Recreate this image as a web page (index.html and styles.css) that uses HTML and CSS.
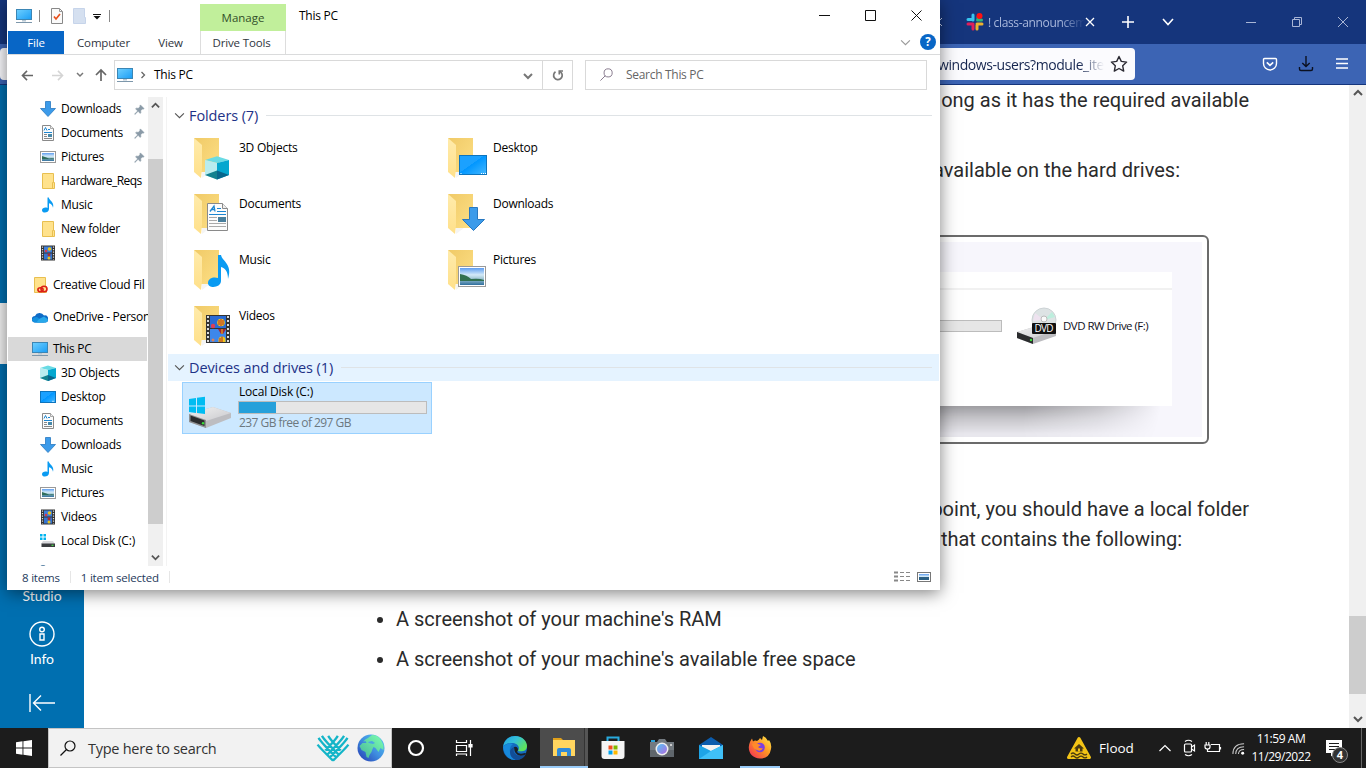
FILE: index.html
```html
<!DOCTYPE html>
<html lang="en">
<head>
<meta charset="utf-8">
<title>This PC</title>
<link rel="stylesheet" href="styles.css">
</head>
<body>
<svg class="sprite" width="0" height="0" aria-hidden="true">
  <defs>
    <linearGradient id="gScreen" x1="0" y1="0" x2="1" y2="1"><stop offset="0" stop-color="#6fd0ff"/><stop offset="1" stop-color="#1a9df5"/></linearGradient>
    <linearGradient id="gDesk" x1="0" y1="0" x2="1" y2="1"><stop offset="0" stop-color="#1ba1ff"/><stop offset=".45" stop-color="#1ba1ff"/><stop offset=".46" stop-color="#0096ff"/><stop offset="1" stop-color="#45b8ff"/></linearGradient>
    <linearGradient id="gFold" x1="0" y1="0" x2="1" y2="1"><stop offset="0" stop-color="#f0ca67"/><stop offset="1" stop-color="#fddf85"/></linearGradient>
    <linearGradient id="gFlap" x1="0" y1="0" x2="0" y2="1"><stop offset="0" stop-color="#ffebab"/><stop offset="1" stop-color="#ffe08a"/></linearGradient>
    <linearGradient id="gSky" x1="0" y1="0" x2="0" y2="1"><stop offset="0" stop-color="#5e9df0"/><stop offset=".4" stop-color="#d4eaf8"/><stop offset=".6" stop-color="#a8cbd8"/><stop offset="1" stop-color="#2f6e9c"/></linearGradient>
    <linearGradient id="gMetal" x1="0" y1="0" x2="1" y2="1"><stop offset="0" stop-color="#f1f1f1"/><stop offset="1" stop-color="#c9c9cd"/></linearGradient>
    <linearGradient id="gEdge" x1="0" y1="0" x2="1" y2=".6"><stop offset="0" stop-color="#1d9fe0"/><stop offset=".5" stop-color="#35c1d8"/><stop offset="1" stop-color="#5fe35a"/></linearGradient>
    <linearGradient id="gFire" x1="1" y1="0" x2="0" y2="1"><stop offset="0" stop-color="#fff04a"/><stop offset=".45" stop-color="#ff9524"/><stop offset="1" stop-color="#f0245c"/></linearGradient>
    <linearGradient id="gGlobe" x1="1" y1="0" x2="0" y2="1"><stop offset="0" stop-color="#5cc8f5"/><stop offset=".5" stop-color="#3f8fe0"/><stop offset="1" stop-color="#2336b0"/></linearGradient>
    <linearGradient id="gLand" x1="1" y1="0" x2="0" y2="1"><stop offset="0" stop-color="#7dffb0"/><stop offset="1" stop-color="#45b59a"/></linearGradient>
    <linearGradient id="gLens" x1="0" y1="0" x2="1" y2="1"><stop offset="0" stop-color="#54c4f4"/><stop offset="1" stop-color="#b06ae0"/></linearGradient>
  </defs>
  <symbol id="pc" viewBox="0 0 16 16"><rect x=".5" y="1.500" width="15" height="10" fill="url(#gScreen)" stroke="#3b86b5"/><path d="M6 12h4v1.500H6z" fill="#b6c6d2"/><path d="M0 14.500h16" stroke="#7d97ab"/></symbol>
  <symbol id="down" viewBox="0 0 16 16"><path d="M5.500.5h5v7h5L8 15.500.5 7.500h5z" fill="#3c9bea" stroke="#2878c0" stroke-width=".8"/></symbol>
  <symbol id="doc" viewBox="0 0 16 16"><path d="M2.500.5h8l3 3v12h-11z" fill="#fbfbfb" stroke="#8a8a8a"/><path d="M10.500.5v3h3" fill="#eee" stroke="#8a8a8a" stroke-width=".7"/><path d="M4 5.500 5.500 2.500 7 5.500M8 4.500h2M4 7.500h8" stroke="#1c86d1" fill="none"/><path d="M4 9.500h3M4 11.500h3M4 13.500h8" stroke="#888"/><path d="M8 9h4v3H8z" fill="#4788a8"/></symbol>
  <symbol id="pic" viewBox="0 0 16 16"><rect x=".5" y="2.500" width="15" height="11" fill="#fff" stroke="#999"/><rect x="2" y="4" width="12" height="8" fill="url(#gSky)"/><path d="M2 7q4 1 7 2.500 3-.5 5 0v.8H2z" fill="#2f6d5c"/></symbol>
  <symbol id="fold" viewBox="0 0 16 16"><path d="M2.500.5h11v9h1v6h-12z" fill="#ffe28c" stroke="#e8bf50"/><path d="M13.500 9.500h-1v6" stroke="#e8bf50" fill="none"/></symbol>
  <symbol id="music" viewBox="0 0 16 16"><path d="M7.500.5h1.300C9.200 3.500 14.500 4.800 13 10.700 12.600 8 11 6.700 9 6.200V12c0 4.200-7 4.800-7 1.300 0-2.300 3-3.300 5.500-2.300z" fill="#0a9bf2"/></symbol>
  <symbol id="video" viewBox="0 0 16 16"><rect x="1" y=".5" width="14" height="15" fill="#333"/><rect x="4" y="1.500" width="8" height="6" fill="#3d7fdc"/><rect x="4" y="8.500" width="8" height="6" fill="#3474d0"/><circle cx="9.500" cy="4" r="1.800" fill="#e8c21c"/><circle cx="6" cy="6" r="1.300" fill="#d23a50"/><circle cx="9" cy="9.800" r="1.500" fill="#b32b2b"/><circle cx="9" cy="13" r="1.500" fill="#e8c21c"/><path d="M2.500 1.500v13M13.500 1.500v13" stroke="#ddd" stroke-width="1.200" stroke-dasharray="1.200 1.300"/></symbol>
  <symbol id="cube" viewBox="0 0 16 16"><path d="M0 3 8 .5 16 3 8 5z" fill="#6adbe4"/><path d="M0 3l8 2v11l-8-3z" fill="#b9ecef"/><path d="M16 3 8 5v11l8-3z" fill="#04a7cf"/><path d="M0 13l8-3v6z" fill="#12818f"/><path d="M8 10l8 3-8 3z" fill="#08668c"/></symbol>
  <symbol id="desk" viewBox="0 0 16 16"><rect x=".5" y="2.500" width="15" height="11" fill="url(#gDesk)" stroke="#0d74bd"/><path d="M12 12.300h2.500" stroke="#fff" stroke-width=".8" stroke-dasharray=".8 .4"/></symbol>
  <symbol id="disk" viewBox="0 0 16 16"><path d="M0 1h2.500v2.500H0zM3.500 1H6v2.500H3.500zM0 4.500h2.500V7H0zM3.500 4.500H6V7H3.500z" fill="#00b4ef"/><path d="M3 8h10l2 3H1z" fill="#d9d9dc"/><rect x="1.500" y="10.500" width="13.500" height="3.500" fill="#3b3d40"/><rect x="11.500" y="11.700" width="2" height="1.200" fill="#4ce04c"/></symbol>
  <symbol id="cc" viewBox="0 0 16 16"><path d="M2.500.5h11v9h1v6h-12z" fill="#ffe28c" stroke="#e8bf50"/><g fill="none" stroke="#dc1f17" stroke-width="1.600"><ellipse cx="8.500" cy="12.800" rx="2.600" ry="2"/><ellipse cx="12" cy="12" rx="3" ry="2.800"/></g></symbol>
  <symbol id="cloud" viewBox="0 0 16 16"><path d="M3 13.500A3.200 3.200 0 0 1 3 7a5 5 0 0 1 9-.5 3.500 3.500 0 0 1 1.500 7z" fill="#0f6cc7"/><path d="M5 8 12.500 13.500h-9A3 3 0 0 1 0 10.500Q1 8 5 8z" fill="#1490df"/><path d="m7 10 5-2.500 3.500 2.500q1 3-2 3.500h-9z" fill="#28a8ea"/></symbol>
  <symbol id="pin" viewBox="0 0 12 12"><path d="M7 1l4 4-1 .6-.8-.2L7.300 7.300 7.500 9.500l-.8.800L4.500 8 1 11.400.6 11 4 7.500 1.700 5.300l.8-.8 2.200.2 1.900-1.900L6.400 2z" fill="#8a9aa7" stroke="#8a9aa7" stroke-width=".6"/></symbol>
  <symbol id="bigfold" viewBox="0 0 40 44"><path d="M1 1h25v34H8z" fill="url(#gFold)"/><path d="M1 1l8 7v24l-1 9-7-6z" fill="url(#gFlap)"/><path d="M9 35h8l-8 6z" fill="#eee" opacity=".6"/></symbol>
  <symbol id="chev" viewBox="0 0 10 10"><path d="M1 3l4 4 4-4" fill="none" stroke="currentColor"/></symbol>
  <symbol id="mag" viewBox="0 0 16 16"><circle cx="10" cy="6" r="5" fill="none" stroke="currentColor" stroke-width="1.200"/><path d="M6.500 9.500.5 15.500" stroke="currentColor" stroke-width="1.200"/></symbol>
  <symbol id="drive" viewBox="0 0 44 34"><path d="M1 18 25 11 43 17v5L18 32 1 26z" fill="#bdbdc1"/><path d="M1 18 25 11l18 6-25 8z" fill="url(#gMetal)"/><path d="M1 18l17 6v8L1 26z" fill="#8f9092"/><path d="M2.500 19.500l14 5v5.500l-14-5z" fill="#2b2c2e"/><circle cx="15" cy="27.300" r="1.200" fill="#38e038"/></symbol>
</svg>

<div class="screen">
  <div class="browser">
    <header class="tabstrip">
      <span class="oldx"><svg width="8" height="10" viewBox="0 0 8 10"><path d="M-4 1l8 8M4 1l-8 8" stroke="#c6d1ea" fill="none"/></svg></span>
      <svg class="slack" viewBox="0 0 18 18"><g stroke-linecap="round" stroke-width="3"><path d="M7 2v5M2 6.500h4" stroke="#36c5f0"/><path d="M12 7V4M11.500 7h4" stroke="#2eb67d"/><path d="M7 11v5M2 11h5" stroke="#e01e5a"/><path d="M11 11h5M11 12v4" stroke="#ecb22e"/></g><circle cx="13.500" cy="3" r="3" fill="#f11"/></svg>
      <span class="tabtitle">! class-announcem</span>
      <svg class="tabx" viewBox="0 0 10 10"><path d="M1 1l8 8M9 1 1 9" stroke="#fff" stroke-width="1.300"/></svg>
      <svg class="newtab" viewBox="0 0 12 12"><path d="M6 0v12M0 6h12" stroke="#fff" stroke-width="1.600"/></svg>
      <svg class="tabchev" viewBox="0 0 12 8"><path d="M1 1l5 5.500L11 1" fill="none" stroke="#fff" stroke-width="1.600"/></svg>
      <div class="wincontrols">
        <svg viewBox="0 0 10 10"><path d="M0 5.500h10"/></svg>
        <svg viewBox="0 0 10 10"><path d="M.5 2.500h7v7h-7zM2.500 2.500v-2h7v7h-2"/></svg>
        <svg viewBox="0 0 10 10"><path d="M0 0l10 10M10 0 0 10"/></svg>
      </div>
    </header>
    <div class="toolbar">
      <div class="urlbar"><span class="url">windows-users?module_iter</span>
        <svg class="star" viewBox="0 0 18 18"><path d="M9 1.500l2.300 4.900 5.300.7-3.900 3.700 1 5.300L9 13.500l-4.700 2.600 1-5.300L1.400 7.100l5.300-.7z" fill="none" stroke="#2b2a33" stroke-width="1.400" stroke-linejoin="round"/></svg>
      </div>
      <div class="tools">
        <svg viewBox="0 0 16 16" fill="none" stroke="#fff" stroke-width="1.400"><path d="M2.500 2.500h11a1 1 0 0 1 1 1V7.500a6.500 6.500 0 0 1-13 0v-4a1 1 0 0 1 1-1z"/><path d="M4.800 6.300 8 9.300l3.200-3" stroke-width="1.600"/></svg>
        <svg viewBox="0 0 16 16" fill="none" stroke="#0b1020" stroke-width="1.400"><path d="M8 0v10.500M4.300 7 8 10.500 11.700 7M1.500 11v2q0 1.500 1.500 1.500h10q1.500 0 1.500-1.500v-2"/></svg>
        <svg viewBox="0 0 16 16" stroke="#fff" stroke-width="1.400"><path d="M2 3h12M2 7.500h12M2 12h12"/></svg>
      </div>
    </div>
    <div class="viewport">
      <nav class="rail">
        <div class="railactive"></div>
        <div class="railfoot">
          <span>Studio</span>
          <svg class="info" viewBox="0 0 26 26" fill="none" stroke="#fff" stroke-width="1.400"><circle cx="13" cy="13" r="12"/><circle cx="13" cy="8.500" r="2.300"/><path d="M11 13h4v6h-4z"/></svg>
          <span>Info</span>
          <svg class="collapse" viewBox="0 0 26 18" fill="none" stroke="#fff" stroke-width="1.400"><path d="M1 0v18M26 9H5M12 1.500 4.500 9l7.500 7.500"/></svg>
        </div>
      </nav>
      <article class="page">
        <p class="l1">ong as it has the required available</p>
        <p class="l2">available on the hard drives:</p>
        <div class="figure"><div class="figbg">
          <div class="figcard">
            <div class="figtop"></div>
            <div class="figrow"><div class="figbar"></div>
              <svg class="dvd" viewBox="0 0 40 38"><path d="M0 25 20 19l19 4v6L16 37 0 31z" fill="#bcbcc0"/><path d="M0 25 20 19l19 4-23 8z" fill="url(#gMetal)"/><path d="M0 25l16 6v6L0 31z" fill="#2b2c2e"/><circle cx="14" cy="33" r="1.200" fill="#38e038"/><circle cx="27" cy="13" r="12" fill="#dde3e4" stroke="#cdd3d5"/><path d="M27 13 35 5l3 5z" fill="#bdeedd"/><path d="M27 13l-11 1 2-8z" fill="#eee2ef"/><circle cx="27" cy="12" r="3" fill="#fafafa" stroke="#bbb"/><rect x="15" y="16" width="24" height="11" rx="1" fill="#111"/><text x="27" y="25.300" fill="#fff" font-family="Open Sans, sans-serif" font-size="10" text-anchor="middle" textLength="19">DVD</text></svg>
              <span>DVD RW Drive (F:)</span></div>
          </div>
          <div class="figshade"></div>
        </div></div>
        <p class="l3">point, you should have a local folder</p>
        <p class="l4">that contains the following:</p>
        <ul><li>A screenshot of your machine's RAM</li><li>A screenshot of your machine's available free space</li></ul>
      </article>
      <div class="vscroll">
        <svg viewBox="0 0 10 10"><path d="M1 7l4-4 4 4" fill="none" stroke="#555" stroke-width="2"/></svg>
        <div class="vthumb"></div>
        <svg viewBox="0 0 10 10"><path d="M1 3l4 4 4-4" fill="none" stroke="#555" stroke-width="2"/></svg>
      </div>
    </div>
  </div>

  <section class="explorer">
    <header class="titlebar">
      <div class="quick">
        <svg class="i16"><use href="#pc"/></svg><i class="sep s1"></i>
        <svg class="i16 q2" viewBox="0 0 16 16"><path d="M2.500.5h8l3 3v12h-11z" fill="#fafafa" stroke="#888"/><path d="M10.500.5v3h3" fill="none" stroke="#999"/><path d="M5 8.500 7 11l4-5" fill="none" stroke="#e8501c" stroke-width="1.700"/></svg>
        <svg class="i16 q3" viewBox="0 0 16 16"><path d="M1.500.5h11v9h1v6h-12z" fill="#d5e0f0" stroke="#c6d4ea"/></svg>
        <svg class="q4" viewBox="0 0 8 6"><path d="M0 .5h8" stroke="#111"/><path d="M.5 2h7L4 5.500z" fill="#111"/></svg><i class="sep s2"></i>
      </div>
      <div class="manage">Manage</div>
      <span class="wtitle">This PC</span>
      <div class="ctl">
        <svg viewBox="0 0 11 11"><path d="M0 5.500h11"/></svg>
        <svg viewBox="0 0 11 11"><path d="M.5.5h10v10H.5z"/></svg>
        <svg viewBox="0 0 11 11"><path d="M.5.5l10 10M10.500.5l-10 10"/></svg>
      </div>
    </header>
    <div class="ribbon">
      <span class="file">File</span><span class="r1">Computer</span><span class="r2">View</span><span class="r3">Drive Tools</span>
      <svg class="rchev"><use href="#chev"/></svg><span class="help">?</span>
    </div>
    <div class="navrow">
      <svg class="n1" viewBox="0 0 14 12" fill="none" stroke="#666" stroke-width="1.700"><path d="M1.500 6H13M6.500 1 1.500 6l5 5"/></svg>
      <svg class="n2" viewBox="0 0 14 12" fill="none" stroke="#d4d4d4" stroke-width="1.700"><path d="M12.500 6H1M7.500 1l5 5-5 5"/></svg>
      <svg class="n3" viewBox="0 0 8 6" fill="none" stroke="#777" stroke-width="1.500"><path d="M1 1l3 3 3-3"/></svg>
      <svg class="n4" viewBox="0 0 12 14" fill="none" stroke="#666" stroke-width="1.700"><path d="M6 2v11M1 7l5-5 5 5"/></svg>
      <div class="address"><svg class="i16"><use href="#pc"/></svg>
        <svg class="a1" viewBox="0 0 6 8"><path d="M1.500 1l3 3-3 3" fill="none" stroke="#666" stroke-width="1.300"/></svg><span>This PC</span>
        <svg class="a2" viewBox="0 0 10 10"><path d="M1 3l4 4 4-4" fill="none" stroke="#777" stroke-width="2"/></svg>
        <div class="refresh"><svg viewBox="0 0 12 12" fill="none" stroke="#777" stroke-width="1.700"><path d="M3.500 2.800A4.300 4.300 0 1 0 9.300 3.700L7.500 2"/><path d="M7.300 5.500V2H11"/></svg></div>
      </div>
      <div class="search"><svg><use href="#mag"/></svg><span>Search This PC</span></div>
    </div>
    <div class="body">
      <nav class="tree">
        <div class="row sub"><svg><use href="#down"/></svg><span>Downloads</span><svg class="pin"><use href="#pin"/></svg></div>
        <div class="row sub"><svg><use href="#doc"/></svg><span>Documents</span><svg class="pin"><use href="#pin"/></svg></div>
        <div class="row sub"><svg><use href="#pic"/></svg><span>Pictures</span><svg class="pin"><use href="#pin"/></svg></div>
        <div class="row sub"><svg><use href="#fold"/></svg><span class="tight">Hardware_Reqs</span></div>
        <div class="row sub"><svg><use href="#music"/></svg><span>Music</span></div>
        <div class="row sub"><svg><use href="#fold"/></svg><span>New folder</span></div>
        <div class="row sub"><svg><use href="#video"/></svg><span>Videos</span></div>
        <div class="row top"><svg><use href="#cc"/></svg><span>Creative Cloud Fil</span></div>
        <div class="row top"><svg><use href="#cloud"/></svg><span>OneDrive - Person</span></div>
        <div class="row top sel"><svg><use href="#pc"/></svg><span>This PC</span></div>
        <div class="row sub"><svg><use href="#cube"/></svg><span>3D Objects</span></div>
        <div class="row sub"><svg><use href="#desk"/></svg><span>Desktop</span></div>
        <div class="row sub"><svg><use href="#doc"/></svg><span>Documents</span></div>
        <div class="row sub"><svg><use href="#down"/></svg><span>Downloads</span></div>
        <div class="row sub"><svg><use href="#music"/></svg><span>Music</span></div>
        <div class="row sub"><svg><use href="#pic"/></svg><span>Pictures</span></div>
        <div class="row sub"><svg><use href="#video"/></svg><span>Videos</span></div>
        <div class="row sub"><svg><use href="#disk"/></svg><span class="wide">Local Disk (C:)</span></div>
        <div class="cutoff"></div>
      </nav>
      <div class="treescroll">
        <svg viewBox="0 0 10 10"><path d="M1 7l4-4 4 4" fill="none" stroke="#555" stroke-width="2"/></svg>
        <div class="tthumb"></div>
        <svg viewBox="0 0 10 10"><path d="M1 3l4 4 4-4" fill="none" stroke="#555" stroke-width="2"/></svg>
      </div>
      <main class="files">
        <div class="group g1"><svg><use href="#chev"/></svg><span>Folders (7)</span><i></i></div>
        <div class="grid">
          <div class="item"><svg viewBox="0 0 40 44"><use href="#bigfold" width="40" height="44"/><use href="#cube" x="12" y="18" width="24" height="25"/></svg><span>3D Objects</span></div>
          <div class="item"><svg viewBox="0 0 40 44"><use href="#bigfold" width="40" height="44"/><rect x="12.500" y="18.500" width="27" height="19" fill="url(#gDesk)" stroke="#0d74bd"/><path d="M34 36.500h5M13.500 36.500h1" stroke="#fff" stroke-dasharray="1 1"/></svg><span>Desktop</span></div>
          <div class="item"><svg viewBox="0 0 40 44"><use href="#bigfold" width="40" height="44"/><path d="M14.500 10.500h15l5 5v22h-20z" fill="#fcfcfc" stroke="#8a8a8a"/><path d="M29.500 10.500v5h5" fill="#eee" stroke="#8a8a8a"/><path d="M17 18.500l4-5.500 1 5.500m-4-2h4" stroke="#1c86d1" stroke-width="1.300" fill="none"/><path d="M24 15.500h4M24 18.500h9M16 21.500h17" stroke="#1c86d1"/><path d="M16 24.500h8M16 27.500h8M16 30.500h17M16 33.500h17" stroke="#aaa"/><path d="M25 24h8v5h-8z" fill="#487f9d"/></svg><span>Documents</span></div>
          <div class="item"><svg viewBox="0 0 40 44"><use href="#bigfold" width="40" height="44"/><path d="M22.500 14.500h8v12h7L26.500 37.500 15.500 26.500h7z" fill="#3c9bea" stroke="#2878c0"/></svg><span>Downloads</span></div>
          <div class="item"><svg viewBox="0 0 40 44"><use href="#bigfold" width="40" height="44"/><path d="M25 6h3c1 6 12 9 7 24 0-8-3-11-7-12v14c0 7-13 8-13 2 0-5 6-6.500 10-5z" fill="#0a9bf2"/></svg><span>Music</span></div>
          <div class="item"><svg viewBox="0 0 40 44"><use href="#bigfold" width="40" height="44"/><rect x="11.500" y="17.500" width="27" height="20" fill="#fff" stroke="#999"/><rect x="13" y="19" width="24" height="17" fill="url(#gSky)"/><path d="M13 25q7 1 11 5 8-1 13 1v1H13z" fill="#31704f"/></svg><span>Pictures</span></div>
          <div class="item"><svg viewBox="0 0 40 44"><use href="#bigfold" width="40" height="44"/><rect x="13" y="10" width="24" height="28" fill="#333"/><rect x="17" y="11" width="16" height="12" fill="#2a6bd4"/><rect x="17" y="24" width="16" height="13" fill="#3d87ea"/><path d="M15 11v26M35 11v26" stroke="#ddd" stroke-width="2" stroke-dasharray="2 2"/><circle cx="28" cy="17.500" r="3.800" fill="#f0c818"/><path d="M28 14v7M26 15v5M30 15v5" stroke="#b32432"/><circle cx="20" cy="21" r="2.200" fill="#dd4057"/><path d="M25 24h8l-3 5h-2z" fill="#a22536"/><path d="M29 24v5" stroke="#f0c818"/><path d="M25.500 37v-2a3.500 3.500 0 0 1 7 0v2z" fill="#f0c818"/><path d="M29 31.500V37M27 33v4" stroke="#b32432"/><circle cx="20" cy="35" r="1.500" fill="#dd8057"/></svg><span>Videos</span></div>
        </div>
        <div class="group g2"><svg><use href="#chev"/></svg><span>Devices and drives (1)</span><i></i></div>
        <div class="disk">
          <svg class="diskicon" viewBox="0 0 44 38"><use href="#drive" y="3" width="44" height="34"/><path d="M1 6l7-1v7.500H1zM9 4.800l8-1v8.700H9zM1 13.500h7V20l-7-1zM9 13.500h8V21l-8-1z" fill="#00bcf2"/></svg>
          <div class="diskinfo"><span>Local Disk (C:)</span><div class="usage"><div style="width:20%"></div></div><span class="free">237 GB free of 297 GB</span></div>
        </div>
      </main>
    </div>
    <footer class="status"><span>8 items</span><i></i><span>1 item selected</span><i></i>
      <svg class="v1" viewBox="0 0 16 12"><path d="M0 1.500h4M0 5.500h4M0 9.500h4" stroke="#888" stroke-width="2"/><path d="M6 1.500h4M12 1.500h4M6 5.500h4M12 5.500h4M6 9.500h4M12 9.500h4" stroke="#888"/></svg>
      <svg class="v2" viewBox="0 0 14 12"><rect x=".5" y="1.500" width="13" height="9" fill="#fff" stroke="#777"/><rect x="2" y="3" width="10" height="6" fill="url(#gSky)"/><path d="M2 6h10v3H2z" fill="#2b5f83"/></svg>
    </footer>
  </section>

  <footer class="taskbar">
    <div class="start"><svg viewBox="0 0 16 16"><path d="M0 2.200l6.500-.9v6.200H0zM7.400 1.200 16 0v7.500H7.400zM0 8.400h6.500v6.300L0 13.800zM7.400 8.400H16V16l-8.600-1.200z" fill="#fff"/></svg></div>
    <div class="tsearch"><svg class="tmag"><use href="#mag"/></svg><span>Type here to search</span>
      <svg class="giving" viewBox="0 0 32 28" fill="none" stroke="#14b5c8" stroke-width="2.400"><path d="M1 3q3 5 18 20M4.500 1q3 5 17 19M11 1q3 5 13 15M0 10q3 4 16 16.500M31 3q-3 5-18 20M27.500 1q-3 5-17 19M21 1q-3 5-13 15M32 10q-3 4-16 16.500"/></svg>
      <svg class="globe" viewBox="0 0 28 28"><circle cx="14" cy="14" r="13.500" fill="url(#gGlobe)"/><path d="M6 8q2-3 5-4l4-3q6 0 9 5l2.500 5v5l-3-2-2 4-3-4-2-1-1 2-1 3-2 3-1 3-2-1-1-5-4-2-2-4 3-3h4l-1-2-3 1z" fill="url(#gLand)"/><path d="M11 8l4-1 3 2-2 1-4-1z" fill="#4aa6e4"/></svg>
    </div>
    <div class="apps">
      <div class="app"><svg viewBox="0 0 24 24"><circle cx="12" cy="12" r="7" fill="none" stroke="#fff" stroke-width="2.200"/></svg></div>
      <div class="app view"><svg viewBox="0 0 24 24" fill="none" stroke="#fff" stroke-width="1.200"><path d="M4.500 4v2.500h10V4M4.500 9.500h10v6h-10zM4.500 20v-2h10v2M18.500 4v16"/><path d="M17 8.500h3v2.500h-3z" fill="#fff"/></svg></div>
      <div class="app edge"><svg viewBox="0 0 24 24"><circle cx="12" cy="12" r="12" fill="#146bc0"/><path d="M0 11C1 4 6 0 12 0c8 0 12 6 12 10 0 5-5 6-9 5 3-5-2-8-6-8-5 0-8 2-9 4z" fill="url(#gEdge)"/><path d="M0 11q4-5 10-3-4 3-3 8 2 6 6 8Q2 24 0 11z" fill="#1789db"/><path d="M11 11q-2 8 6 9 3 0 6-2-3 6-10 6-6-2-6-8 0-3 4-5z" fill="#124d96"/><path d="M11 11q3-1 4 2 0 2-1 3 2 3 8 1l1 .5-1.500 1.500q-10 3-10.500-8z" fill="#1b1f25"/></svg></div>
      <div class="app active"><svg viewBox="0 0 24 24"><path d="M1 3h8l2 2h12v3H1z" fill="#e0a01a"/><path d="M1 5h22v16H1z" fill="#ffd55f"/><path d="M5 21v-6q0-2 2-2h10q2 0 2 2v6h-4v-4H9v4z" fill="#2f8ad8"/></svg></div>
      <div class="app"><svg viewBox="0 0 24 24"><path d="M6.500 6V1.500h11V6" fill="none" stroke="#28aadd" stroke-width="2"/><path d="M.5 5h23v15q0 3-3 3h-17q-3 0-3-3z" fill="#f5f5f5"/><path d="M7.500 9.500h4v4h-4z" fill="#f25022"/><path d="M12.500 9.500h4v4h-4z" fill="#7fba00"/><path d="M7.500 14.500h4v4h-4z" fill="#00a4ef"/><path d="M12.500 14.500h4v4h-4z" fill="#ffb900"/></svg></div>
      <div class="app"><svg viewBox="0 0 24 24"><path d="M1 4h4v3H1z" fill="#2aa1d8"/><path d="M0 6h7l2-3h6l2 3h7v15H0z" fill="#737a80"/><path d="M0 14h24v7H0z" fill="#5f666c"/><circle cx="12" cy="13" r="6.500" fill="#eee"/><circle cx="12" cy="13" r="5" fill="url(#gLens)"/><rect x="20" y="8" width="2" height="2" fill="#ccc"/></svg></div>
      <div class="app"><svg viewBox="0 0 24 24"><path d="M0 9 12 1l12 8v4H0z" fill="#0b5cad"/><path d="M3 9h18v8H3z" fill="#f2f2f2"/><path d="M0 9l12 6L24 9v14H0z" fill="#1ea4e6"/><path d="M24 9v14H0l12-8z" fill="#40c0f7"/></svg></div>
      <div class="app running"><svg viewBox="0 0 24 24"><path d="M12 23.500C5 23.500.5 18.500.8 12 1 8 3 5 4 3.500l1 3Q7 5 9 6q2-1 3-3l2 2 1-4q3 1 5 5l1-1q3 4 2 9-1.500 9.500-11 9.500z" fill="url(#gFire)"/><circle cx="12" cy="12.500" r="4.800" fill="#7b3fe0"/><path d="M4 9q4-2 6 0l3 1-3 2q2 2 5 1-2 4-6 2-4-1-5-6z" fill="#ff8a2a"/></svg></div>
    </div>
    <div class="tray">
      <svg class="flood" viewBox="0 0 24 22"><path d="M12 1.500 22.500 20.500h-21z" fill="#f4c416" stroke="#f4c416" stroke-width="3" stroke-linejoin="round"/><path d="M7 11.500 12 7l5 4.500h-1.500v3h-7v-3z" fill="#4a3a10"/><path d="M4 17q2-2 4 0t4 0 4 0 4 0M4 20q2-2 4 0t4 0 4 0 4 0" fill="none" stroke="#4a3a10" stroke-width="1.200"/><path d="M11 11.500h2v3h-2z" fill="#f4c416"/></svg>
      <span class="ftext">Flood</span>
      <svg class="t1" viewBox="0 0 12 8"><path d="M.5 7 6 1.500 11.500 7" fill="none" stroke="#fff" stroke-width="1.200"/></svg>
      <svg class="t2" viewBox="0 0 14 18" fill="none" stroke="#fff" stroke-width="1.200"><rect x="1.500" y="5" width="7" height="8" rx="1"/><path d="M8.500 8l3-2v6l-3-2M2 2.500q3.500-2.500 7 0M2 15.500q3.500 2.500 7 0"/></svg>
      <svg class="t3" viewBox="0 0 18 12" fill="none" stroke="#fff" stroke-width="1.200"><path d="M7 2.500h8.500v7H6M16.500 5v2.500M1 3h5v2q0 2-2.500 2T1 5zM2.200 0v3M4.800 0v3M3.500 7v2.500H8"/></svg>
      <svg class="t4" viewBox="0 0 14 14" fill="none" stroke="#ccc" stroke-width="1.100"><path d="M1 13Q1 2 13 2M4 13q0-8 9-8M7 13q0-5 6-5" /><circle cx="11.500" cy="12" r="1.600" fill="#fff" stroke="none"/></svg>
      <div class="clock"><span>11:59 AM</span><span>11/29/2022</span></div>
      <div class="notif"><svg viewBox="0 0 18 18"><path d="M1 1h16v13h-7l-4 3.500V14H1z" fill="#fff"/><path d="M4 4.500h10M4 7.500h10M4 10.500h6" stroke="#1c1c1c"/></svg><b>4</b></div>
      <i class="peek"></i>
    </div>
  </footer>
</div>
</body>
</html>
```
FILE: styles.css
```css
* { box-sizing: border-box; }
body { margin: 0; overflow: hidden; font-family: "Open Sans", "Noto Sans", sans-serif; }
svg { display: block; flex: none; overflow: visible; }
.sprite { position: absolute; overflow: hidden; }
p, ul { margin: 0; }
.screen { position: relative; width: 1366px; height: 768px; display: flex; flex-direction: column; overflow: hidden; background: #fff; }

/* browser behind */
.browser { height: 728px; display: flex; flex-direction: column; }
.tabstrip { height: 44px; background: #15357c; display: flex; align-items: center; padding-left: 938px; }
.oldx { width: 28px; overflow: hidden; }
.slack { width: 18px; height: 18px; }
.tabtitle { width: 97px; margin-left: 4px; font-size: 12px; letter-spacing: -.35px; white-space: nowrap; color: #a9b8dc; -webkit-mask-image: linear-gradient(90deg, #000 75%, transparent); }
.tabx { width: 10px; height: 10px; }
.newtab { width: 12px; height: 12px; margin-left: 27px; }
.tabchev { width: 12px; height: 8px; margin-left: 28px; }
.wincontrols { margin-left: auto; margin-right: 18px; display: flex; gap: 36px; }
.wincontrols svg { width: 10px; height: 10px; fill: none; stroke: #a9b6d6; }
.toolbar { height: 41px; background: #3c64b4; border-bottom: 1px solid #15357c; display: flex; align-items: center; padding: 0 16px 0 0; }
.urlbar { width: 1135px; height: 32px; background: #fbfbfe; border-radius: 4px; display: flex; align-items: center; padding-left: 938px; padding-right: 7px; color: #15254f; }
.url { width: 166px; font-size: 14px; letter-spacing: -.42px; white-space: nowrap; -webkit-mask-image: linear-gradient(90deg, #000 85%, transparent); }
.star { width: 18px; height: 18px; margin-left: auto; }
.tools { display: flex; gap: 20px; margin-left: auto; }
.tools svg { width: 16px; height: 16px; }
.viewport { flex: 1; display: flex; min-height: 0; }
.rail { width: 84px; background: #006fb0; padding-top: 218px; }
.railactive { height: 61px; background: #f3f3f3; }
.railfoot { display: flex; flex-direction: column; align-items: center; margin-top: 222px; color: #fff; font: 14px/20px Lato, sans-serif; }
.info { width: 26px; height: 26px; margin: 15px 0 2px; }
.collapse { width: 26px; height: 18px; margin-top: 25px; }
.page { flex: 1; color: #2b2b2b; font: 20px/30px Roboto, sans-serif; }
.page p { text-align: right; height: 30px; white-space: nowrap; }
.l1, .l3 { padding-right: 100px; }
.l2 { padding-right: 169px; margin-top: 40px; }
.l4 { padding-right: 167px; }
.page .l3 { margin-top: 50px; }
.figure { width: 1125px; height: 209px; border: 2px solid #6b6b6b; border-radius: 6px; padding: 5px; margin-top: 50px; }
.figbg { height: 195px; background: #f7f6fc; padding: 30px 30px 0 0; overflow: hidden; }
.figcard { height: 134px; background: #fff; }
.figshade { height: 31px; background: linear-gradient(180deg, rgba(0,0,0,.36), rgba(0,0,0,.2) 40%, rgba(0,0,0,.06) 90%); -webkit-mask-image: linear-gradient(100deg, #000 86%, rgba(0,0,0,.55) 93%, transparent 98.500%); }
.figtop { height: 18px; border-bottom: 2px solid #f1f1f1; }
.figrow { display: flex; align-items: center; height: 72px; padding-left: 800px; }
.figbar { width: 111px; height: 12px; border: 1px solid #bcbcbc; background: #e6e6e6; }
.dvd { width: 40px; height: 38px; margin-left: 15px; }
.figrow span { margin: -2px 0 0 6px; font: 11.500px "Open Sans", sans-serif; letter-spacing: -.53px; color: #112; white-space: nowrap; }
.page ul { margin-top: 45px; padding-left: 312px; }
.page li { height: 40px; line-height: 40px; }
.vscroll { width: 17px; background: #f0f0f0; display: flex; flex-direction: column; align-items: center; padding: 3px 0 4px; }
.vscroll svg { width: 10px; height: 10px; }
.vthumb { width: 17px; height: 78px; background: #cdcdcd; margin: 518px 0 auto; }

/* explorer window */
.explorer { position: absolute; left: 7px; top: 0; width: 933px; height: 590px; background: #fff; display: flex; flex-direction: column; font-size: 12px; color: #000; box-shadow: 0 3px 16px rgba(0,0,0,.5); letter-spacing: -.25px; }
.i16 { width: 16px; height: 16px; }
.titlebar { height: 31px; display: flex; align-items: center; }
.quick { width: 193px; display: flex; align-items: center; padding-left: 9px; }
.sep { width: 1px; height: 12px; background: #888; }
.s1 { margin-left: 7px; } .q2 { margin-left: 9px; } .q3 { margin-left: 7px; } .q4 { width: 8px; height: 6px; margin-left: 5px; margin-top: 2px; } .s2 { margin-left: 8px; }
.manage { align-self: flex-end; width: 86px; height: 27px; background: #c1ef9b; text-align: center; line-height: 28px; font-size: 11.500px; color: #33502a; letter-spacing: 0; }
.wtitle { margin-left: 13px; }
.ctl { margin-left: auto; display: flex; gap: 35px; padding-right: 18px; }
.ctl svg { width: 11px; height: 11px; fill: none; stroke: #111; }
.ribbon { height: 24px; border-bottom: 1px solid #dadbdc; display: flex; align-items: stretch; line-height: 23px; font-size: 11.500px; padding-left: 1px; color: #30353e; letter-spacing: -.15px; }
.file { width: 56px; background: #0866c6; color: #fff; text-align: center; }
.r1 { width: 79px; text-align: center; } .r2 { width: 55px; text-align: center; }
.r3 { width: 86px; margin-left: 2px; padding-right: 3px; text-align: center; border-left: 1px solid #ddd; border-right: 1px solid #ddd; }
.rchev { width: 11px; height: 11px; margin: 6px 0 0 auto; color: #999; }
.help { width: 16px; height: 16px; border-radius: 50%; background: #0866c6; color: #fff; font-weight: 700; text-align: center; line-height: 16px; margin: 3px 4px 0 9px; }
.navrow { height: 42px; display: flex; align-items: center; padding: 0 0 2px 14px; }
.navrow > div { height: 30px; border: 1px solid #d9d9d9; display: flex; align-items: center; }
.n1, .n2 { width: 13px; height: 11px; } .n2 { margin-left: 17px; }
.n3 { width: 8px; height: 6px; margin-left: 12px; } .n4 { width: 12px; height: 14px; margin-left: 11px; }
.navrow .address { width: 459px; margin-left: 7px; padding: 0 0 1px 2px; }
.a1 { width: 6px; height: 8px; margin: 1px 8px 0 7px; }
.a2 { width: 10px; height: 10px; margin: 2px 9px 0 auto; }
.refresh { width: 30px; height: 28px; border-left: 1px solid #d9d9d9; display: grid; place-items: center; margin-top: 1px; }
.refresh svg { width: 12px; height: 12px; }
.search { width: 342px; margin-left: 12px; padding: 0 0 1px 14px; color: #666; letter-spacing: -.3px; }
.search svg { width: 13px; height: 13px; margin-right: 13px; color: #86788c; }
.body { height: 469px; display: flex; }
.tree { width: 141px; padding-left: 1px; overflow: hidden; }
.row { height: 24px; display: flex; align-items: center; white-space: nowrap; width: 139px; }
.row svg { width: 16px; height: 16px; margin-right: 5px; }
.row span { margin-top: -2px; }
.tight { letter-spacing: -.55px; } .wide { letter-spacing: -.18px; }
.sub { padding-left: 32px; } .top { padding-left: 24px; margin: 8px 0; letter-spacing: -.3px; } .top + .top { margin-top: 0; } .sel { margin-bottom: 0; background: #d9d9d9; }
.row .pin { width: 11px; height: 11px; margin: 0 2px 0 auto; }
.cutoff { width: 6px; height: 6px; border-radius: 50%; background: #5a83a5; margin: 12px 0 0 32px; }
.treescroll { width: 15px; background: #f0f0f0; display: flex; flex-direction: column; align-items: center; padding: 4px 0; }
.treescroll svg { width: 9px; height: 9px; }
.tthumb { width: 15px; height: 365px; background: #cdcdcd; margin: 49px 0 auto; }
.files { flex: 1; margin-left: 3px; border-left: 1px solid #f3f3f3; }
.group { display: flex; align-items: center; height: 27px; padding: 0 8px 0 7px; color: #1e3287; font-size: 14.500px; letter-spacing: -.1px; }
.group svg { width: 11px; height: 11px; margin-right: 4px; color: #555; }
.group span { margin-top: -1px; }
.group i { flex: 1; height: 1px; background: #dfe3e6; margin-left: 8px; }
.g1 { margin-top: 5px; }
.g1 span { margin-top: 0; }
.grid { display: grid; grid-template-columns: 254px 254px; grid-auto-rows: 56px; padding: 8px 0 0 26px; height: 225px; }
.item { display: flex; } .item svg { width: 40px; height: 44px; } .item span { margin: 2px 0 0 6px; }
.g2 { background: #e5f3ff; margin: 0 1px; padding: 0 7px 0 6px; }
.disk { width: 250px; height: 52px; margin: 1px 0 0 15px; background: #cce8ff; border: 1px solid #99d1ff; display: flex; }
.diskicon { width: 44px; height: 38px; margin: 10px 0 0 5px; }
.diskinfo { width: 189px; margin-left: 6px; line-height: 18px; }
.diskinfo span { display: block; padding-left: 1px; letter-spacing: -.18px; }
.usage { height: 13px; border: 1px solid #bcbcbc; background: #e6e6e6; }
.usage div { height: 11px; background: #26a0da; }
.diskinfo .free { color: #6d7880; letter-spacing: -.55px; }
.status { height: 24px; display: flex; align-items: center; padding: 0 0 2px 15px; font-size: 11.500px; color: #1e395b; letter-spacing: -.2px; }
.status i { width: 1px; height: 12px; background: #e6e6e6; margin: 0 10px; }
.v1 { width: 16px; height: 12px; margin-left: auto; } .v2 { width: 14px; height: 12px; margin: 0 9px 0 7px; }

/* taskbar */
.taskbar { height: 40px; background: #1c1c1c; display: flex; color: #fff; }
.start { width: 48px; display: grid; place-items: center; }
.start svg { width: 16px; height: 16px; }
.tsearch { width: 344px; background: #f2f2f2; border: 1px solid #c4c4c4; display: flex; align-items: center; padding-left: 11px; color: #333; font-size: 14.500px; letter-spacing: -.26px; }
.tmag { width: 16px; height: 16px; margin-right: 12px; color: #111; }
.giving { width: 32px; height: 27px; margin-left: auto; } .globe { width: 28px; height: 28px; margin: 0 6px 0 8px; }
.apps { display: flex; }
.app { width: 49px; display: grid; place-items: center; }
.app svg { width: 24px; height: 24px; }
.app:first-child { width: 48px; } .edge { width: 52px; margin-right: -1px; }
.view { padding-right: 1px; }
.active { width: 48px; background: linear-gradient(90deg, #4c4c4c 44px, #333 44px, #333 45px, #555 45px); border-bottom: 2px solid #99cbf8; }
.running { width: 40px; margin-left: 5px; border-bottom: 2px solid #99cbf8; }
.tray { margin-left: auto; display: flex; align-items: center; }
.flood { width: 24px; height: 22px; } .ftext { width: 38px; margin-left: 8px; font-size: 13.500px; }
.t1 { width: 12px; height: 8px; margin-left: 22px; } .t2 { width: 14px; height: 18px; margin-left: 12px; } .t3 { width: 18px; height: 12px; margin-left: 7px; } .t4 { width: 13px; height: 13px; margin-left: 10px; }
.clock { width: 72px; display: flex; flex-direction: column; text-align: center; font-size: 12px; line-height: 18px; letter-spacing: -.45px; white-space: nowrap; }
.notif { position: relative; margin-left: 8px; } .notif svg { width: 18px; height: 18px; }
.notif b { position: absolute; left: 7px; top: 8px; width: 16px; height: 16px; border-radius: 50%; background: #333; border: 1px solid #888; font-size: 11px; line-height: 14px; text-align: center; }
.peek { width: 1px; height: 40px; background: #666; margin: 0 4px 0 18px; }
```
